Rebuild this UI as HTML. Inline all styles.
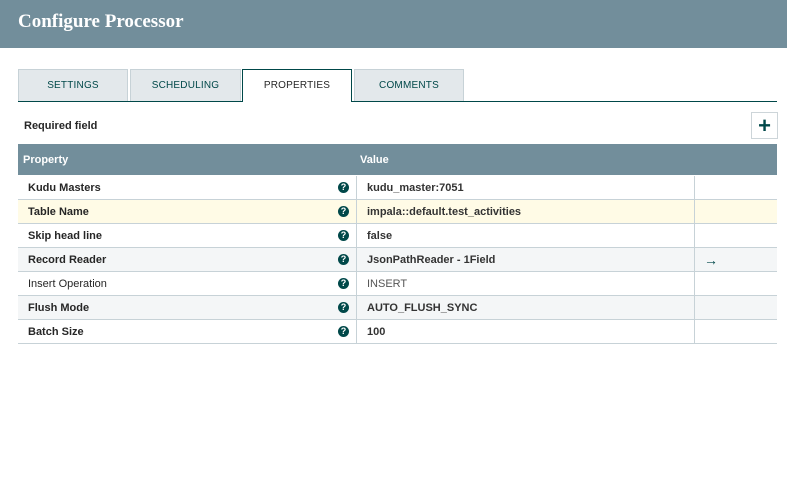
<!DOCTYPE html>
<html><head><style>
*{margin:0;padding:0;box-sizing:border-box}
body{width:787px;height:479px;background:#fff;font-family:"Liberation Sans",sans-serif;position:relative;overflow:hidden;color:#262626}
.hdr{position:absolute;left:0;top:0;width:787px;height:48px;background:#728e9b;color:#fff;font-family:"Liberation Serif",serif;font-weight:bold;font-size:19px;padding:11px 0 0 18px}
.tab{position:absolute;top:69px;height:32px;background:#e3e8eb;border:1px solid #c7d2d7;border-bottom:none;font-size:10px;color:#004849;text-align:center;line-height:32px;letter-spacing:.2px}
.tab.act{background:#fff;border:1px solid #004849;border-bottom:none;color:#262626;height:33px;z-index:2}
.line{position:absolute;left:18px;top:101px;width:759px;height:1px;background:#004849}
.req{position:absolute;left:24px;top:120px;font-size:11px;font-weight:bold;color:#262626}
.plus{position:absolute;left:751px;top:112px;width:27px;height:27px;border:1px solid #cdd5d9;background:#fff;color:#004849;font-size:22px;font-weight:bold;text-align:center;line-height:25px}
.th{position:absolute;left:18px;top:144px;width:759px;height:31px;background:#728e9b;color:#fff;font-size:11px;font-weight:bold}
.th span{position:absolute;top:9px}
.row{position:absolute;left:18px;width:759px;height:24px;border-bottom:1px solid #c7d2d7;font-size:11px}
.row div{position:absolute;top:1px;height:23px;line-height:23px}
.p{left:10px;font-weight:bold}
.q{left:320px;top:6px!important;width:11px;height:11px!important;border-radius:50%;background:#004849;color:#fff;font-size:9px;font-weight:bold;line-height:11px!important;text-align:center}
.v{left:349px;font-weight:bold;color:#333}
.s1{left:338px;width:1px;background:#c7d2d7;top:0!important}
.s2{left:676px;width:1px;background:#c7d2d7;top:0!important}
.ar{left:686px;color:#004849;font-weight:bold;font-size:14px}
</style></head><body>
<div class="hdr">Configure Processor</div>
<div class="tab" style="left:18px;width:110px">SETTINGS</div>
<div class="tab" style="left:130px;width:111px">SCHEDULING</div>
<div class="tab act" style="left:242px;width:110px">PROPERTIES</div>
<div class="tab" style="left:354px;width:110px">COMMENTS</div>
<div class="line"></div>
<div class="req">Required field</div>
<div class="plus">+</div>
<div class="th"><span style="left:5px;top:10px">Property</span><span style="left:342px;top:10px">Value</span></div>

<div class="row" style="top:176px;background:#fff"><div class="p">Kudu Masters</div><div class="q">?</div><div class="s1"></div><div class="v">kudu_master:7051</div><div class="s2"></div></div>
<div class="row" style="top:200px;background:#fffbe6"><div class="p">Table Name</div><div class="q">?</div><div class="s1"></div><div class="v">impala::default.test_activities</div><div class="s2"></div></div>
<div class="row" style="top:224px;background:#fff"><div class="p">Skip head line</div><div class="q">?</div><div class="s1"></div><div class="v">false</div><div class="s2"></div></div>
<div class="row" style="top:248px;background:#f4f6f7"><div class="p">Record Reader</div><div class="q">?</div><div class="s1"></div><div class="v">JsonPathReader - 1Field</div><div class="s2"></div><div class="ar">→</div></div>
<div class="row" style="top:272px;background:#fff"><div class="p" style="font-weight:normal">Insert Operation</div><div class="q">?</div><div class="s1"></div><div class="v" style="color:#555;font-weight:normal">INSERT</div><div class="s2"></div></div>
<div class="row" style="top:296px;background:#f4f6f7"><div class="p">Flush Mode</div><div class="q">?</div><div class="s1"></div><div class="v">AUTO_FLUSH_SYNC</div><div class="s2"></div></div>
<div class="row" style="top:320px;background:#fff"><div class="p">Batch Size</div><div class="q">?</div><div class="s1"></div><div class="v">100</div><div class="s2"></div></div>
</body></html>
